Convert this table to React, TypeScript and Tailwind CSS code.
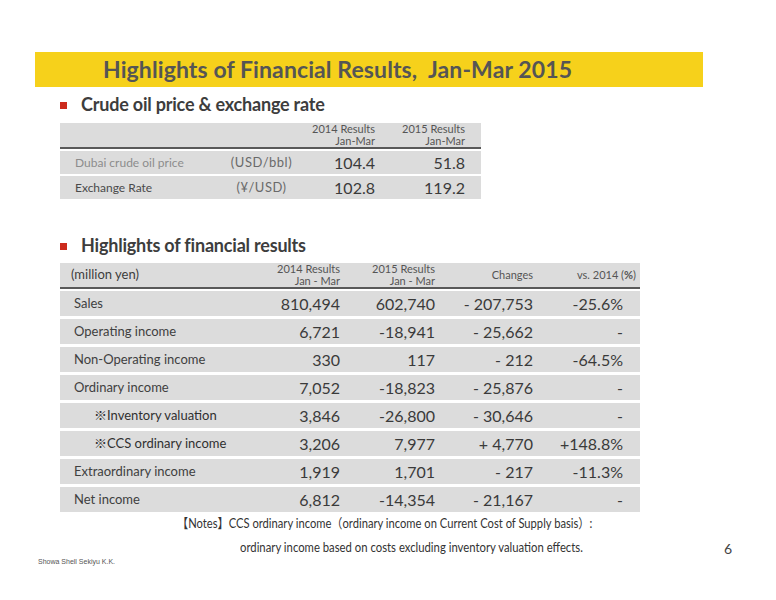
import React from 'react';

const oilRows = [
  { label: 'Dubai crude oil price', unit: '(USD/bbl)', y14: '104.4', y15: '51.8', light: true },
  { label: 'Exchange Rate', unit: '(¥/USD)', y14: '102.8', y15: '119.2', light: false },
];

const resultRows = [
  { label: 'Sales', a: '810,494', b: '602,740', c: '- 207,753', d: '-25.6%' },
  { label: 'Operating income', a: '6,721', b: '-18,941', c: '- 25,662', d: '-' },
  { label: 'Non-Operating income', a: '330', b: '117', c: '- 212', d: '-64.5%' },
  { label: 'Ordinary income', a: '7,052', b: '-18,823', c: '- 25,876', d: '-' },
  { label: '※Inventory valuation', a: '3,846', b: '-26,800', c: '- 30,646', d: '-', indent: true },
  { label: '※CCS ordinary income', a: '3,206', b: '7,977', c: '+ 4,770', d: '+148.8%', indent: true },
  { label: 'Extraordinary income', a: '1,919', b: '1,701', c: '- 217', d: '-11.3%' },
  { label: 'Net income', a: '6,812', b: '-14,354', c: '- 21,167', d: '-' },
];

function Heading({ children }: { children: React.ReactNode }) {
  return (
    <div className="flex items-center ml-[60px] h-[22px]">
      <span className="w-[7px] h-[7px] bg-[#cc2b1d] mr-[14px] mt-[3px]" />
      <span className="text-[18px] font-bold text-[#3d3d3d] tracking-[-0.2px]">{children}</span>
    </div>
  );
}

export default function App() {
  return (
    <div className="w-[776px] h-[600px] bg-white flex flex-col font-['Lato','Noto_Sans_CJK_JP',sans-serif] text-[#404040]">
      {/* title bar */}
      <div className="mt-[52px] ml-[35px] w-[668px] h-[35px] bg-[#f6d11b] flex items-center pl-[68px]">
        <h1 className="text-[23px] font-bold text-[#555555] leading-none whitespace-pre tracking-[0.1px]">
          Highlights of Financial Results,  Jan-Mar 2015
        </h1>
      </div>

      <div className="mt-[6px]">
        <Heading>Crude oil price &amp; exchange rate</Heading>
      </div>

      {/* oil table */}
      <div className="ml-[60px] mt-[8px] w-[421px]">
        <div className="grid grid-cols-[150px_73px_77px_90px] pl-[15px] pr-[16px] h-[24px] bg-[#dcdcdc] text-[11px] leading-[12px] text-[#555]">
          <div />
          <div />
          <div className="text-right self-center">2014 Results<br />Jan-Mar</div>
          <div className="text-right self-center">2015 Results<br />Jan-Mar</div>
        </div>
        <div className="h-[2px] bg-[#595959]" />
        {oilRows.map((r) => (
          <div
            key={r.label}
            className="grid grid-cols-[150px_73px_77px_90px] pl-[15px] pr-[16px] h-[23px] mt-[2px] bg-[#dcdcdc] items-center"
          >
            <div className={r.light ? 'text-[12px] text-[#8c8c8c]' : 'text-[12px] text-[#4a4a4a]'}>
              {r.label}
            </div>
            <div className="text-[13px] text-[#6a6a6a] text-center tracking-[0.5px]">{r.unit}</div>
            <div className="text-[16px] text-right text-[#3a3a3a]">{r.y14}</div>
            <div className="text-[16px] text-right text-[#3a3a3a]">{r.y15}</div>
          </div>
        ))}
      </div>

      <div className="mt-[35px]">
        <Heading>Highlights of financial results</Heading>
      </div>

      {/* results table */}
      <div className="ml-[60px] mt-[7px] w-[580px]">
        <div className="grid grid-cols-[176px_90px_95px_98px_90px] pl-[14px] pr-[17px] h-[24px] bg-[#dcdcdc] items-center text-[#555]">
          <div className="text-[13px] text-[#3d3d3d] -ml-[3px]">(million yen)</div>
          <div className="text-[11px] leading-[12px] text-right">2014 Results<br />Jan - Mar</div>
          <div className="text-[11px] leading-[12px] text-right">2015 Results<br />Jan - Mar</div>
          <div className="text-[11px] text-right">Changes</div>
          <div className="text-[11px] text-right -mr-[13px] whitespace-nowrap">
            vs. 2014 (<span className="font-bold">%</span>)
          </div>
        </div>
        <div className="h-[2px] bg-[#595959]" />
        {resultRows.map((r, i) => (
          <div
            key={r.label}
            className={`grid grid-cols-[176px_90px_95px_98px_90px] pl-[14px] pr-[17px] h-[25px] bg-[#dcdcdc] items-center ${i === 0 ? 'mt-[2px]' : 'mt-[3px]'}`}
          >
            <div className={r.indent ? 'pl-[20px] text-[13px] text-[#303030]' : 'text-[13px] text-[#404040]'}>
              {r.label}
            </div>
            <div className="text-[16px] text-right text-[#3a3a3a]">{r.a}</div>
            <div className="text-[16px] text-right text-[#3a3a3a]">{r.b}</div>
            <div className="text-[16px] text-right text-[#3a3a3a]">{r.c}</div>
            <div className="text-[16px] text-right text-[#3a3a3a]">{r.d}</div>
          </div>
        ))}
      </div>

      {/* notes */}
      <div className="-mt-[1px] ml-[177px] mr-[44px] text-[13px] leading-[24px] text-[#333]">
        <div className="whitespace-nowrap origin-left scale-x-[0.86]">
          【Notes】CCS ordinary income（ordinary income on Current Cost of Supply basis）:
        </div>
        <div className="flex justify-between h-[24px]">
          <span className="ml-[63px] whitespace-nowrap origin-left scale-x-[0.87]">
            ordinary income based on costs excluding inventory valuation effects.
          </span>
          <span className="text-[14px] text-[#444] leading-[20px] mt-[4px]">6</span>
        </div>
      </div>

      <div className="ml-[38px] -mt-[9px] leading-none">
        <span className="text-[7px] text-[#555] font-['Liberation_Sans_Narrow',sans-serif]">Showa Shell Sekiyu K.K.</span>
      </div>
    </div>
  );
}
